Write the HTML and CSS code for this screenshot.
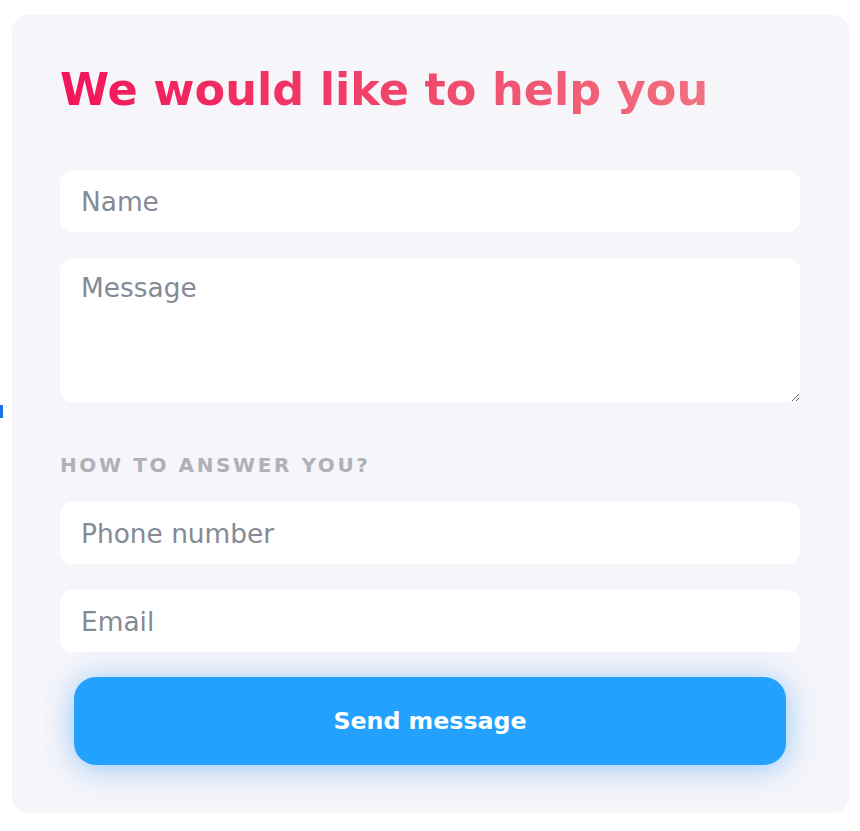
FILE: index.html
```html
<!DOCTYPE html>
<html lang="en">
<head>
<meta charset="utf-8">
<title>Contact</title>
<link rel="stylesheet" href="styles.css">
</head>
<body>
<span class="edge-mark"></span>
<div class="card">
  <h1 class="title">We would like to help you</h1>
  <form class="form">
    <input class="field" type="text" placeholder="Name">
    <textarea class="field field-area" placeholder="Message"></textarea>
    <div class="label">HOW TO ANSWER YOU?</div>
    <input class="field" type="text" placeholder="Phone number">
    <input class="field field-email" type="text" placeholder="Email">
    <button class="send" type="button">Send message</button>
  </form>
</div>
</body>
</html>
```
FILE: styles.css
```css
html, body {
  margin: 0;
  padding: 0;
  background: #ffffff;
}
body {
  padding: 15px 0 0 12px;
  font-family: "DejaVu Sans", sans-serif;
}
.edge-mark {
  position: absolute;
  left: 0;
  top: 405px;
  width: 3px;
  height: 13px;
  background: #1a73e8;
}
.card {
  width: 837px;
  height: 798px;
  box-sizing: border-box;
  background: #f5f5fa;
  border-radius: 16px;
  padding: 0 49px 0 48px;
  overflow: hidden;
}
.title {
  margin: 49px 0 0 0;
  font-size: 44.6px;
  line-height: 52px;
  font-weight: 700;
  background: linear-gradient(90deg, #f2155a 0%, #f03e68 45%, #f1717f 100%);
  -webkit-background-clip: text;
  background-clip: text;
  color: transparent;
  display: inline-block;
}
.form {
  display: flex;
  flex-direction: column;
  margin-top: 54px;
}
.field {
  display: block;
  box-sizing: border-box;
  width: 100%;
  height: 62px;
  border: none;
  outline: none;
  border-radius: 12px;
  background: #ffffff;
  padding: 0 21px;
  font-family: "DejaVu Sans", sans-serif;
  font-size: 26.4px;
  color: #333;
}
.field::placeholder {
  color: #858a95;
  opacity: 1;
}
.field-area {
  height: 144px;
  margin-top: 26px;
  padding-top: 14px;
  resize: vertical;
  line-height: normal;
}
.label {
  margin: 51px 0 25px 0;
  font-size: 20px;
  line-height: 24px;
  font-weight: 700;
  letter-spacing: 2.6px;
  color: #b0b0b8;
}
.field-email {
  margin-top: 26px;
}
.send {
  margin: 25px 14px 0 14px;
  height: 88px;
  border: none;
  border-radius: 22px;
  background: #22a2fe;
  color: #ffffff;
  font-family: "DejaVu Sans", sans-serif;
  font-weight: 700;
  font-size: 23.7px;
  box-shadow: 0 3px 30px rgba(34, 145, 245, 0.45);
  cursor: pointer;
}
```
